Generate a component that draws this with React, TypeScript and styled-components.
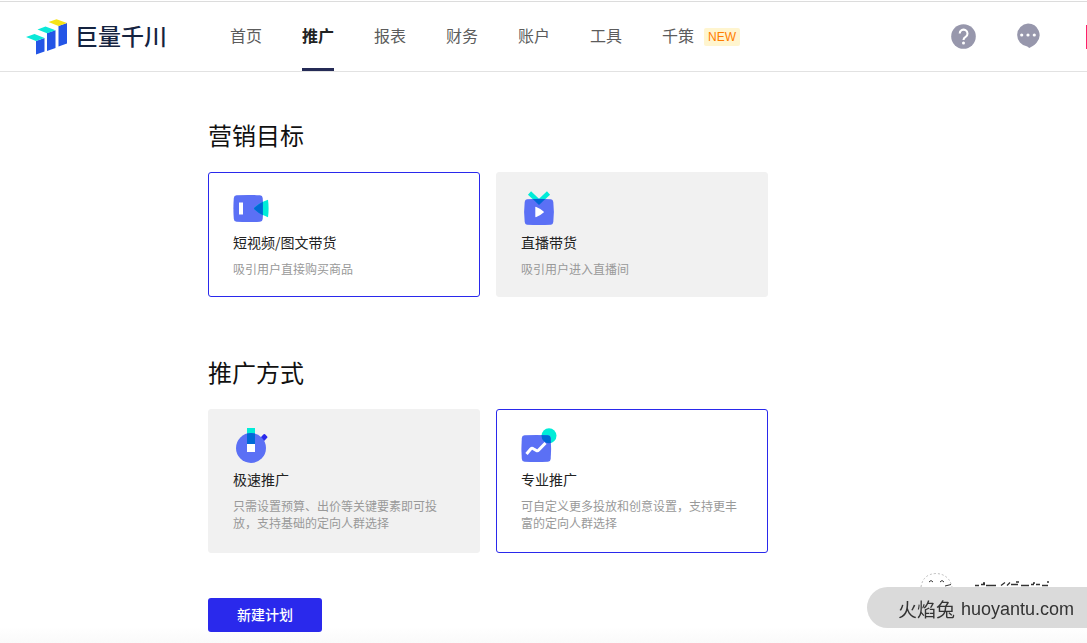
import React, { useState } from "react";
import styled, { createGlobalStyle } from "styled-components";

const Global = createGlobalStyle`
  * { box-sizing: border-box; }
  body {
    margin: 0;
    background: #fff;
    font-family: "Liberation Sans", "Noto Sans CJK SC", sans-serif;
    color: #222;
  }
`;

const Page = styled.div`
  min-height: 100vh;
  padding-top: 1px;
  background: linear-gradient(to top, #fafafa, #fff 16px);
`;

const Header = styled.header`
  display: flex;
  align-items: stretch;
  height: 71px;
  border-top: 1px solid #dcdcdc;
  border-bottom: 1px solid #e2e2e2;
  background: #fff;
`;

const Brand = styled.a`
  display: flex;
  align-items: center;
  gap: 7px;
  width: 206px;
  padding-left: 24px;
  color: #15233f;
  font-size: 23px;
  font-weight: 500;
  line-height: 32px;
  text-decoration: none;
`;

const Nav = styled.nav`
  display: flex;
  gap: 40px;
  margin-left: 24px;
`;

const NavLink = styled.a<{ $active?: boolean }>`
  display: flex;
  align-items: center;
  gap: 10px;
  padding-top: 3px;
  border-bottom: 3px solid ${(p) => (p.$active ? "#252b56" : "transparent")};
  color: ${(p) => (p.$active ? "#222" : "#5c5c5c")};
  font-size: 16px;
  font-weight: ${(p) => (p.$active ? 700 : 400)};
  line-height: 24px;
  white-space: nowrap;
  text-decoration: none;
`;

const Badge = styled.span`
  padding: 0 4px;
  border-radius: 2px;
  background: #fff5cf;
  color: #ff7d00;
  font-size: 12px;
  line-height: 18px;
`;

const Tools = styled.div`
  display: flex;
  align-items: center;
  gap: 40px;
  margin-left: auto;
`;

const IconButton = styled.button`
  display: flex;
  padding: 0;
  border: 0;
  background: none;
  cursor: pointer;
`;

const AccountEdge = styled.span`
  width: 1px;
  height: 24px;
  margin-left: 6px;
  background: #ff1f6b;
`;

const Main = styled.main`
  display: flex;
  flex-direction: column;
  align-items: flex-start;
  gap: 45px;
  max-width: 768px;
  margin-left: 208px;
  padding: 48px 0 11px;
`;

const Groups = styled.div`
  display: flex;
  flex-direction: column;
  gap: 60px;
  width: 100%;
  max-width: 560px;
`;

const Group = styled.section`
  display: flex;
  flex-direction: column;
  gap: 18px;
`;

const Heading = styled.h2`
  margin: 0;
  color: #111;
  font-size: 24px;
  font-weight: 400;
  line-height: 34px;
`;

const Cards = styled.div<{ $tall?: boolean }>`
  display: grid;
  grid-template-columns: 1fr 1fr;
  gap: 16px;
  grid-auto-rows: minmax(${(p) => (p.$tall ? 144 : 125)}px, auto);
`;

const Radio = styled.input`
  position: absolute;
  opacity: 0;
  pointer-events: none;
`;

const Card = styled.label<{ $selected: boolean }>`
  display: flex;
  flex-direction: column;
  padding: 18px 24px 16px;
  border: 1px solid ${(p) => (p.$selected ? "#2a29ec" : "#f1f1f1")};
  border-radius: 3px;
  background: ${(p) => (p.$selected ? "#fff" : "#f1f1f1")};
  cursor: pointer;
`;

const CardTitle = styled.span`
  margin-top: 4px;
  color: #222;
  font-family: "Noto Sans CJK SC", sans-serif;
  font-size: 14px;
  line-height: 22px;
`;

const CardText = styled.span`
  margin-top: 9px;
  color: #999;
  font-size: 12px;
  line-height: 17px;
`;

const Submit = styled.button`
  padding: 0 29px;
  border: 0;
  border-radius: 3px;
  background: #2a29ec;
  color: #fff;
  font-family: inherit;
  font-size: 14px;
  font-weight: 500;
  line-height: 34px;
  cursor: pointer;
`;

const Mark = styled.div`
  position: fixed;
  right: 0;
  bottom: 15px;
  display: flex;
  flex-direction: column;
`;

const MarkLabel = styled.div`
  display: flex;
  align-items: center;
  gap: 6px;
  height: 41px;
  padding: 2px 13px 0 31px;
  border-radius: 21px 0 0 21px;
  background: #dadada;
  color: #333;
  font-family: "Liberation Sans", sans-serif;
  font-size: 18px;
  line-height: 32px;
  white-space: nowrap;
`;

const MarkName = styled.span`
  font-family: "Noto Sans CJK SC", sans-serif;
  font-size: 19px;
`;

const Logo = () => (
  <svg width="44" height="36" viewBox="0 0 44 36" aria-hidden="true">
    <path d="M12 22l8.500-3v13.500l-8.500 3z" fill="#2455e6" />
    <path d="M23 14l8.500-2.700v17.700l-8.500 3z" fill="#2455e6" />
    <path d="M34.500 7l8.500-3v20.500l-8.500 3z" fill="#2455e6" />
    <path d="M2 18l8.500-3 10 4-8.500 3z" fill="#0be8d8" />
    <path d="M13.500 10.500l8-3 10 3.800-8.500 2.900z" fill="#0be8d8" />
    <path d="M24.500 3l8-2.700L43 4l-8.500 3z" fill="#f6e316" />
  </svg>
);

const HelpIcon = () => (
  <svg width="25" height="25" viewBox="0 0 25 25" aria-hidden="true">
    <circle cx="12.500" cy="12.500" r="12.300" fill="#9797ac" />
    <path d="M8.700 9.600a3.900 3.900 0 1 1 5.900 3.300c-1.400.8-2.100 1.500-2.100 3.200" fill="none" stroke="#fff" strokeWidth="2.100" />
    <circle cx="12.500" cy="19" r="1.500" fill="#fff" />
  </svg>
);

const ChatIcon = () => (
  <svg width="24" height="28" viewBox="0 0 24 28" aria-hidden="true">
    <path d="M12 .5a11.500 11.500 0 0 1 8.400 19.400C18 22.400 15.600 23.500 13.300 25l-2-1.600A11.500 11.500 0 0 1 12 .5z" fill="#9797ac" />
    <circle cx="5.700" cy="12" r="1.600" fill="#fff" />
    <circle cx="12" cy="12" r="1.600" fill="#fff" />
    <circle cx="18.300" cy="12" r="1.600" fill="#fff" />
  </svg>
);

const VideoIcon = () => (
  <svg width="36" height="36" viewBox="0 0 36 36" aria-hidden="true">
    <path d="M3.500 4.300Q15 3.500 27 4.300q2.500.2 2.700 2.700.8 10.500 0 21-.2 2.500-2.700 2.700-12 .8-23.500 0Q1 30.500.8 28 0 17.500.8 7 1 4.500 3.500 4.300z" fill="#5b70f5" />
    <path d="M21.500 16.600Q27 11.200 35 8.800q1.200 8.700 0 17.500Q27 23.500 21.500 18.500q-1-1 0-1.900z" fill="#00ecd8" />
    <path d="M21.500 16.600Q25 13.200 29.900 10.800v13.500Q25 21.800 21.500 18.500q-1-1 0-1.900z" fill="#0069d6" />
    <path d="M6 11.500h4v12H6z" fill="#fff" />
  </svg>
);

const LiveIcon = () => (
  <svg width="36" height="36" viewBox="0 0 36 36" aria-hidden="true">
    <path d="M8.500 2l9.500 9 9.500-9" fill="none" stroke="#00ecd8" strokeWidth="4.500" />
    <path d="M6 8.300q12-1 24 0 2 .2 2.300 2.700 1.200 10 0 20-.3 2.500-2.300 2.700-12 .8-24 0-2-.2-2.300-2.700-1.200-10 0-20Q4 8.500 6 8.300z" fill="#5b70f5" />
    <path d="M11.700 8h12.600L18 14z" fill="#0069d6" />
    <path d="M14.300 16.500q0-1 1-.6 4.500 1.800 7.300 4.500.6.600 0 1.200-2.800 2.700-7.300 4.500-1 .4-1-.6z" fill="#fff" />
  </svg>
);

const SpeedIcon = () => (
  <svg width="36" height="36" viewBox="0 0 36 36" aria-hidden="true">
    <rect x="28.500" y="6.500" width="5" height="6" rx="1" transform="rotate(45 31 9.500)" fill="#2a29ec" />
    <path d="M14 0h8v8h-8z" fill="#00ecd8" />
    <circle cx="18" cy="20" r="15" fill="#5b70f5" />
    <path d="M14 5.500q4-1 8 0V16h-8z" fill="#0069d6" />
    <path d="M14 16h8v8h-8z" fill="#fff" />
  </svg>
);

const ProIcon = () => (
  <svg width="36" height="36" viewBox="0 0 36 36" aria-hidden="true">
    <defs>
      <clipPath id="panel">
        <path d="M3.500 7.300Q15 6.500 27 7.300q2.500.2 2.700 2.700.8 10.500 0 21-.2 2.500-2.700 2.700-12 .8-23.500 0Q1 33.500.8 31 0 20.500.8 10 1 7.500 3.500 7.300z" />
      </clipPath>
    </defs>
    <circle cx="28" cy="7.700" r="7.500" fill="#00ecd8" />
    <g clipPath="url(#panel)">
      <path d="M0 0h36v36H0z" fill="#5b70f5" />
      <circle cx="28" cy="7.700" r="7.500" fill="#0069d6" />
    </g>
    <path d="M5.500 26l4.200-5q1.200-1.200 2.600-.3l3 1.800q1.300.8 2.400-.4L24.500 15" fill="none" stroke="#fff" strokeWidth="3" />
  </svg>
);

const FaceSketch = () => (
  <svg width="220" height="15" viewBox="0 0 220 15" aria-hidden="true">
    <path d="M54 15Q56 2 69 1.500 82 2 85 15" fill="none" stroke="#bbb" strokeDasharray="2 2" />
    <path d="M62 10q2-3 4 0M73 10q2-3 4 0M78 14l6-1.500" fill="none" stroke="#333" />
    <path d="M108 13.500h4m2-1h4m1 1h10m5 0l4-3m2 3l3-3m1 2h7m3 1h8m2-1h3m2 0h4m2 1h6M116 11h2m31-1h3m14 1h2m12-1h2" fill="none" stroke="#333" strokeWidth="1.300" />
  </svg>
);

const navItems = ["首页", "推广", "报表", "财务", "账户", "工具", "千策"];

const groups = [
  {
    name: "goal",
    title: "营销目标",
    tall: false,
    options: [
      { title: "短视频/图文带货", text: "吸引用户直接购买商品", Icon: VideoIcon },
      { title: "直播带货", text: "吸引用户进入直播间", Icon: LiveIcon },
    ],
  },
  {
    name: "method",
    title: "推广方式",
    tall: true,
    options: [
      { title: "极速推广", text: "只需设置预算、出价等关键要素即可投放，支持基础的定向人群选择", Icon: SpeedIcon },
      { title: "专业推广", text: "可自定义更多投放和创意设置，支持更丰富的定向人群选择", Icon: ProIcon },
    ],
  },
];

export default function App() {
  const [selected, setSelected] = useState<Record<string, number>>({ goal: 0, method: 1 });

  return (
    <Page lang="zh-CN">
      <Global />
      <Header>
        <Brand href="#">
          <Logo />
          巨量千川
        </Brand>
        <Nav>
          {navItems.map((item) => (
            <NavLink key={item} href="#" $active={item === "推广"}>
              {item}
              {item === "千策" && <Badge>NEW</Badge>}
            </NavLink>
          ))}
        </Nav>
        <Tools>
          <IconButton aria-label="帮助"><HelpIcon /></IconButton>
          <IconButton aria-label="消息"><ChatIcon /></IconButton>
          <AccountEdge />
        </Tools>
      </Header>
      <Main>
        <Groups>
          {groups.map((group) => (
            <Group key={group.name} role="radiogroup" aria-label={group.title}>
              <Heading>{group.title}</Heading>
              <Cards $tall={group.tall}>
                {group.options.map(({ title, text, Icon }, i) => (
                  <Card key={title} $selected={selected[group.name] === i}>
                    <Radio
                      type="radio"
                      name={group.name}
                      checked={selected[group.name] === i}
                      onChange={() => setSelected({ ...selected, [group.name]: i })}
                    />
                    <Icon />
                    <CardTitle>{title}</CardTitle>
                    <CardText>{text}</CardText>
                  </Card>
                ))}
              </Cards>
            </Group>
          ))}
        </Groups>
        <Submit type="button">新建计划</Submit>
      </Main>
      <Mark>
        <FaceSketch />
        <MarkLabel>
          <MarkName>火焰兔</MarkName>
          huoyantu.com
        </MarkLabel>
      </Mark>
    </Page>
  );
}
